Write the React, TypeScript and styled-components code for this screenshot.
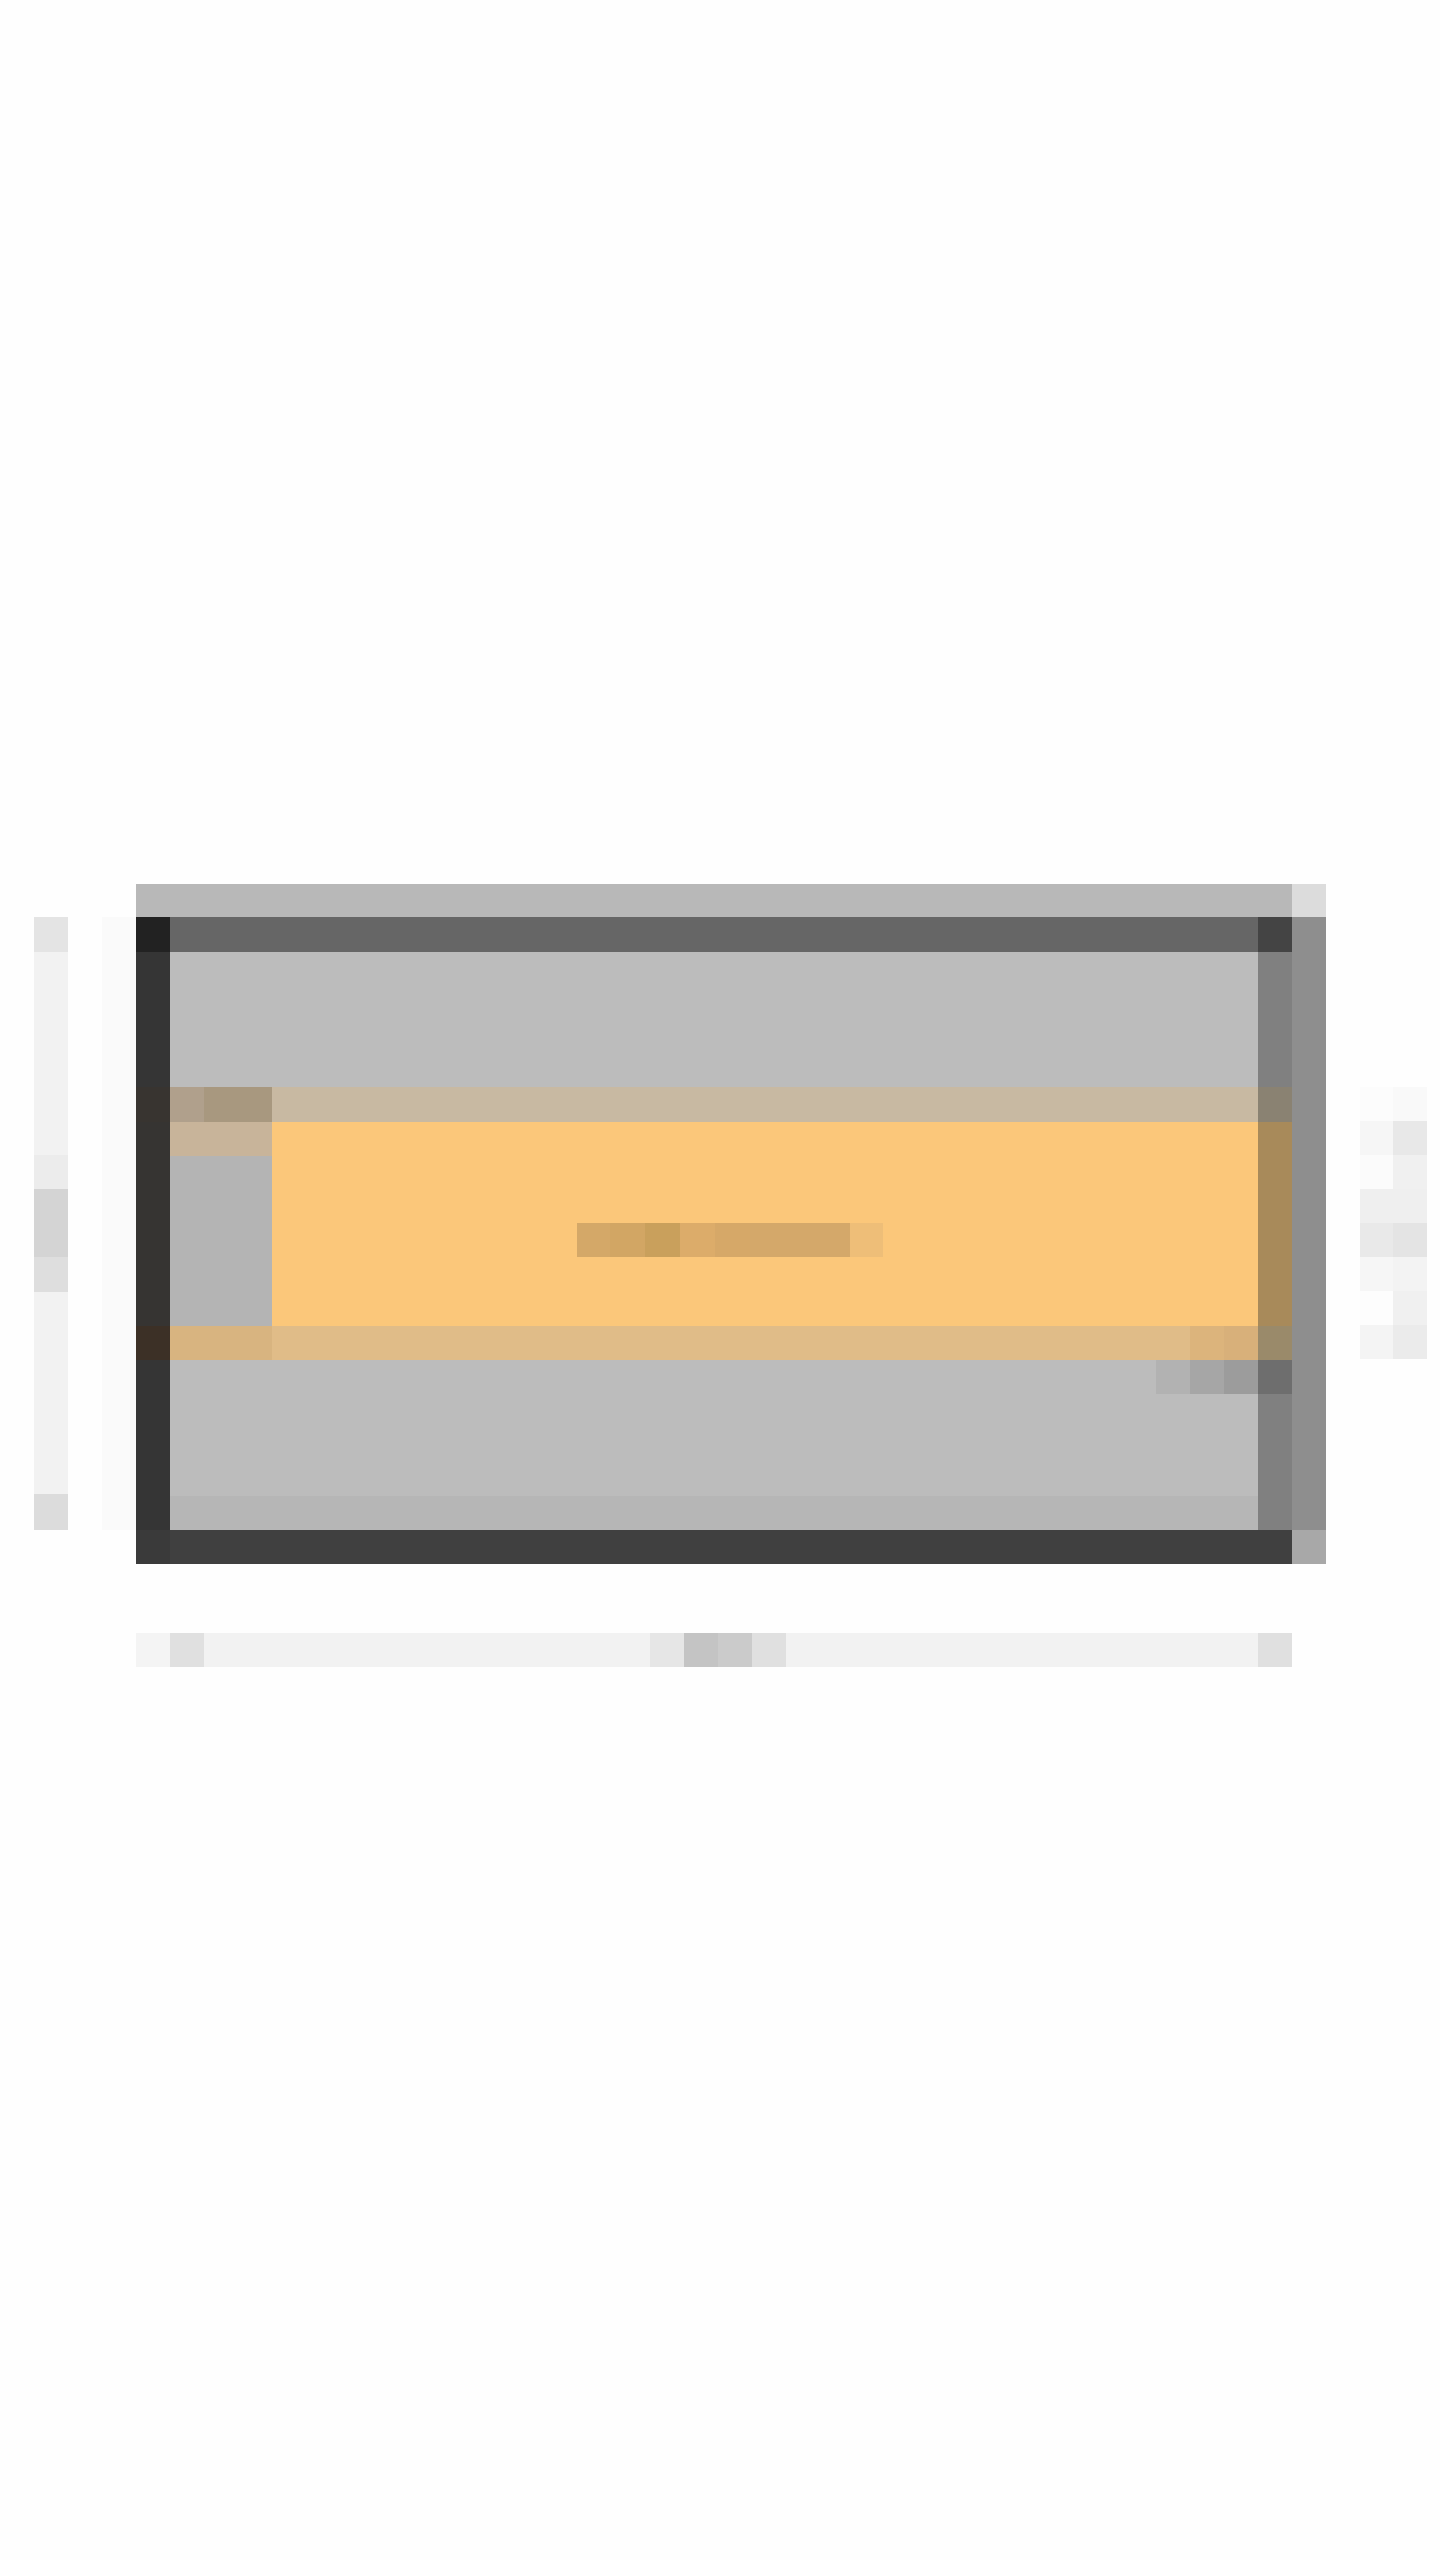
import styled, { createGlobalStyle } from "styled-components";

const GlobalStyle = createGlobalStyle`
  html, body {
    margin: 0;
    padding: 0;
    background: #fefefe;
  }
  body {
    font-family: "Liberation Sans", Arial, sans-serif;
  }
`;

const railSegments = [
  { h: 35, tone: "#e4e4e4" },
  { h: 203, tone: "#f2f2f2" },
  { h: 34, tone: "#ececec" },
  { h: 68, tone: "#d4d4d4" },
  { h: 35, tone: "#dedede" },
  { h: 202, tone: "#f2f2f2" },
  { h: 36, tone: "#dcdcdc" },
];

const glyphCells = [
  "#fcfcfc", "#f9f9f9",
  "#f6f6f6", "#e8e8e8",
  "#fbfbfb", "#f0f0f0",
  "#efefef", "#efefef",
  "#e9e9e9", "#e4e4e4",
  "#f6f6f6", "#f3f3f3",
  "#fdfdfd", "#f0f0f0",
  "#f4f4f4", "#ebebeb",
];

const statusSegments = [
  { w: 34, tone: "#f4f4f4" },
  { w: 34, tone: "#e0e0e0" },
  { w: 446, tone: "#f2f2f2" },
  { w: 34, tone: "#e6e6e6" },
  { w: 34, tone: "#c4c4c4" },
  { w: 34, tone: "#cbcbcb" },
  { w: 34, tone: "#e0e0e0" },
  { w: 472, tone: "#f2f2f2" },
  { w: 34, tone: "#e0e0e0" },
];

const labelGlyphs = [
  { w: 33, tone: "#d4a868" },
  { w: 35, tone: "#d2a664" },
  { w: 35, tone: "#c9a05c" },
  { w: 35, tone: "#dcac6a" },
  { w: 35, tone: "#d6a868" },
  { w: 100, tone: "#d4a86a" },
  { w: 33, tone: "#eebe78" },
];

export default function App() {
  return (
    <>
      <GlobalStyle />
      <Page>
        <SideRail>
          {railSegments.map((s, i) => (
            <RailSegment key={i} $h={s.h} $tone={s.tone} />
          ))}
        </SideRail>
        <FaintRail />
        <Main>
          <Window>
            <TitleBar />
            <TitleCap />
            <TopCornerLeft />
            <TopRule />
            <TopCornerRight />
            <OuterEdge />
            <LeftEdge />
            <UpperPane />
            <RightEdge />
            <Band>
              <BandRim $top>
                <RimCap $top />
                <RimFill $top />
              </BandRim>
              <BandBody>
                <Stub />
                <Face>
                  <Label aria-label="label">
                    {labelGlyphs.map((g, i) => (
                      <LabelGlyph key={i} $w={g.w} $tone={g.tone} />
                    ))}
                  </Label>
                </Face>
              </BandBody>
              <BandRim>
                <RimCap />
                <RimFill />
              </BandRim>
            </Band>
            <LowerPane>
              <ShadeTab />
            </LowerPane>
            <BottomRule />
            <FootCap />
          </Window>
          <StatusBar>
            {statusSegments.map((s, i) => (
              <StatusSegment key={i} $w={s.w} $tone={s.tone} />
            ))}
          </StatusBar>
        </Main>
        <SideGlyph>
          {glyphCells.map((c, i) => (
            <GlyphCell key={i} $tone={c} />
          ))}
        </SideGlyph>
      </Page>
    </>
  );
}

const Page = styled.div`
  min-height: 2560px;
  box-sizing: border-box;
  display: flex;
  align-items: flex-start;
  padding: 884px 0 0 34px;
`;

const SideRail = styled.div`
  width: 34px;
  margin-top: 33px;
  display: flex;
  flex-direction: column;
`;

const RailSegment = styled.div<{ $h: number; $tone: string }>`
  height: ${(p) => p.$h}px;
  background: ${(p) => p.$tone};
`;

const FaintRail = styled.div`
  width: 34px;
  height: 613px;
  margin: 33px 0 0 34px;
  background: #fafafa;
`;

const Main = styled.div`
  width: 1190px;
  display: flex;
  flex-direction: column;
`;

const Window = styled.div`
  display: grid;
  grid-template-columns: 34px 102px 986px 34px 34px;
  grid-template-rows: 33px 35px 135px 273px 170px 34px;
  grid-template-areas:
    "title title title title cap"
    "tl top top tr edge"
    "left upper upper right edge"
    "left band band right edge"
    "left lower lower right edge"
    "bot bot bot bot foot";
`;

const TitleBar = styled.div`
  grid-area: title;
  background: #b8b8b8;
`;

const TitleCap = styled.div`
  grid-area: cap;
  background: #dcdcdc;
`;

const TopCornerLeft = styled.div`
  grid-area: tl;
  background: #222222;
`;

const TopRule = styled.div`
  grid-area: top;
  background: #666666;
`;

const TopCornerRight = styled.div`
  grid-area: tr;
  background: #444444;
`;

const OuterEdge = styled.div`
  grid-area: edge;
  background: #8e8e8e;
`;

const LeftEdge = styled.div`
  grid-area: left;
  background: linear-gradient(
    to bottom,
    #353535 0 135px,
    #383430 135px 170px,
    #363432 170px 374px,
    #3c3026 374px 408px,
    #353535 408px
  );
`;

const RightEdge = styled.div`
  grid-area: right;
  background: linear-gradient(
    to bottom,
    #808080 0 135px,
    #8a8272 135px 170px,
    #a88a5a 170px 374px,
    #9a8a6a 374px 408px,
    #6e6e6e 408px 442px,
    #808080 442px
  );
`;

const UpperPane = styled.div`
  grid-area: upper;
  background: #bcbcbc;
`;

const Band = styled.div`
  grid-area: band;
  display: flex;
  flex-direction: column;
`;

const BandRim = styled.div<{ $top?: boolean }>`
  height: ${(p) => (p.$top ? 35 : 34)}px;
  display: flex;
`;

const RimCap = styled.div<{ $top?: boolean }>`
  width: 102px;
  background: ${(p) =>
    p.$top
      ? "linear-gradient(to right, #b0a08c 0 34px, #a8987f 34px)"
      : "#d8b480"};
`;

const RimFill = styled.div<{ $top?: boolean }>`
  flex: 1;
  background: ${(p) =>
    p.$top
      ? "#c8b9a2"
      : "linear-gradient(to right, #e0bc88 0 918px, #dcb47c 918px 952px, #d8b07a 952px)"};
`;

const BandBody = styled.div`
  height: 204px;
  display: flex;
`;

const Stub = styled.div`
  width: 102px;
  background: linear-gradient(to bottom, #c8b49a 0 34px, #b4b4b4 34px);
`;

const Face = styled.div`
  flex: 1;
  box-sizing: border-box;
  padding: 101px 0 0 305px;
  background: #fbc77a;
`;

const Label = styled.div`
  display: flex;
  height: 34px;
`;

const LabelGlyph = styled.span<{ $w: number; $tone: string }>`
  width: ${(p) => p.$w}px;
  background: ${(p) => p.$tone};
`;

const LowerPane = styled.div`
  grid-area: lower;
  display: flex;
  justify-content: flex-end;
  align-items: flex-start;
  background: linear-gradient(to bottom, #bcbcbc 0 136px, #b6b6b6 136px);
`;

const ShadeTab = styled.div`
  width: 102px;
  height: 34px;
  background: linear-gradient(
    to right,
    #b2b2b2 0 34px,
    #a6a6a6 34px 68px,
    #9c9c9c 68px
  );
`;

const BottomRule = styled.div`
  grid-area: bot;
  background: linear-gradient(to right, #3a3a3a 0 34px, #404040 34px);
`;

const FootCap = styled.div`
  grid-area: foot;
  background: #a8a8a8;
`;

const StatusBar = styled.div`
  width: 1156px;
  height: 34px;
  margin-top: 69px;
  display: flex;
`;

const StatusSegment = styled.div<{ $w: number; $tone: string }>`
  width: ${(p) => p.$w}px;
  background: ${(p) => p.$tone};
`;

const SideGlyph = styled.div`
  margin: 203px 0 0 34px;
  display: grid;
  grid-template-columns: 33px 34px;
  grid-auto-rows: 34px;
`;

const GlyphCell = styled.div<{ $tone: string }>`
  background: ${(p) => p.$tone};
`;
